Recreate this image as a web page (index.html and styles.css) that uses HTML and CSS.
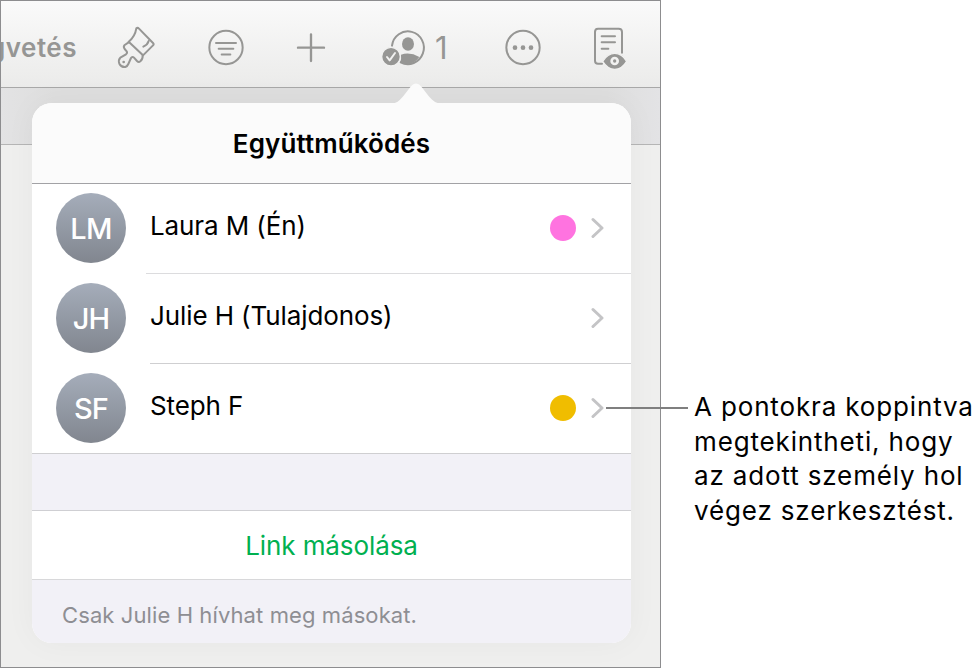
FILE: index.html
```
<!DOCTYPE html>
<html lang="hu">
<head>
  <meta charset="utf-8">
  <title>Együttműködés</title>
  <link rel="stylesheet" href="styles.css">
</head>
<body>
  <div class="main">
    <div class="screen">
      <div class="toolbar">
        <div class="doc_title">gvetés</div>
        <svg class="icon" width="42" height="45" viewBox="345 75 126 135">
          <path d="M409 85 Q413 82 417 86 L459 129 Q463 133 459 136 L429 166 L386 125 Q405 110 409 85 Z"/>
          <path d="M386 127 L374 135 Q369 140 374 147 L380 154 Q383 159 378 163 L361 173 Q354 181 358 191 Q364 202 376 201 Q382 199 385 192 L393 174 Q397 168 402 173 L411 183 Q416 188 421 184 Q429 177 428 166"/>
          <path d="M446 123 Q443 134 430 140"/>
          <circle class="fill" cx="371" cy="186" r="4"/>
        </svg>
        <svg class="icon" width="42" height="45" viewBox="0 0 126 135">
          <circle cx="63" cy="67.500" r="50"/>
          <path d="M33 54H93M41 71.500H85M50 88.500H76"/>
        </svg>
        <svg class="icon" width="42" height="45" viewBox="0 0 126 135">
          <path class="thick" d="M63 28V108M24 68H102"/>
        </svg>
        <div class="collab">
          <svg class="icon" width="48" height="45" viewBox="360 75 144 135">
            <path d="M396 137 A48 49 0 1 1 422 187"/>
            <ellipse class="fill" cx="444" cy="132" rx="18" ry="20"/>
            <path class="fill" d="M423 164 Q450 155 478 171 Q464 191 444 192 Q430 193 420 187 Q425 176 423 164Z"/>
            <circle class="badge" cx="393" cy="170" r="28"/>
            <path class="check" d="M381 171 L389 181 L405 159"/>
          </svg>
          <span class="count">1</span>
        </div>
        <svg class="icon" width="42" height="45" viewBox="0 0 126 135">
          <circle cx="63" cy="67.500" r="50"/>
          <circle class="fill" cx="39" cy="68" r="7"/>
          <circle class="fill" cx="63" cy="68" r="7"/>
          <circle class="fill" cx="87" cy="68" r="7"/>
        </svg>
        <svg class="icon" width="42" height="45" viewBox="330 75 126 135">
          <path d="M366 191 H354 Q345 191 345 182 V96 Q345 86 354 86 H416 Q426 86 426 96 V158"/>
          <path d="M365 109H405M365 127H405M365 146H385"/>
          <path class="badge" d="M368 184 Q383 160 404 160 Q426 160 440 184 Q426 208 404 208 Q383 208 368 184Z"/>
          <circle class="eye" cx="404" cy="183" r="13"/>
          <circle class="fill" cx="404" cy="183" r="5"/>
        </svg>
      </div>
      <div class="band"></div>

      <div class="popover">
        <svg class="arrow" width="58" height="23" viewBox="387 82 58 23">
          <path d="M387 104 C397 104 399 101 403 96.500 L410 87.500 C414 82 418 82 422 87.500 L429 96.500 C433 101 436 104 445 104 V105 H387Z"/>
        </svg>
        <div class="panel">
          <div class="header">Együttműködés</div>
          <div class="row">
            <div class="avatar">LM</div>
            <div class="info first">
              <span class="name">Laura M (Én)</span>
              <span class="dot pink"></span>
              <svg class="chevron" width="14" height="22" viewBox="0 0 14 22"><path d="M2 2.500 L11 11 L2 19.500"/></svg>
            </div>
          </div>
          <div class="row">
            <div class="avatar">JH</div>
            <div class="info">
              <span class="name">Julie H (Tulajdonos)</span>
              <svg class="chevron" width="14" height="22" viewBox="0 0 14 22"><path d="M2 2.500 L11 11 L2 19.500"/></svg>
            </div>
          </div>
          <div class="row last">
            <div class="avatar">SF</div>
            <div class="info">
              <span class="name">Steph F</span>
              <span class="dot yellow"></span>
              <svg class="chevron" width="14" height="22" viewBox="0 0 14 22"><path d="M2 2.500 L11 11 L2 19.500"/></svg>
            </div>
          </div>
          <div class="spacer"></div>
          <div class="copy_link">Link másolása</div>
          <div class="footer">Csak Julie H hívhat meg másokat.</div>
        </div>
      </div>
    </div>
    <div class="callout">
      <div class="callout_line"></div>
      <div>A pontokra koppintva</div>
      <div>megtekintheti, hogy</div>
      <div>az adott személy hol</div>
      <div>végez szerkesztést.</div>
    </div>
  </div>
</body>
</html>
```

FILE: styles.css
```
* {
  box-sizing: border-box;
}
body {
  margin: 0;
  background-color: #fff;
  font-family: Inter, "Liberation Sans", sans-serif;
  font-size: 26px;
  font-variant-ligatures: none;
  color: #000;
}
.main {
  display: flex;
  width: 976px;
  height: 668px;
}
.screen {
  position: relative;
  width: 661px;
  height: 668px;
  border: 1px solid #8d8d8f;
  background-color: #efefee;
  overflow: hidden;
}
.toolbar {
  display: grid;
  grid-template-columns: 114px 90px 85px 90px 122px 88px 1fr;
  height: 87px;
  padding-top: 24px;
  background: linear-gradient(#fafafa, #ebebea);
  border-bottom: 1px solid #a8a8a8;
}
.doc_title {
  display: flex;
  justify-content: flex-end;
  width: 76px;
  height: 45px;
  line-height: 45px;
  font-weight: 600;
  letter-spacing: 0.5px;
  color: #969694;
}
.icon {
  display: block;
  fill: none;
  stroke: #969694;
  stroke-width: 6;
  stroke-linecap: round;
  stroke-linejoin: round;
}
.icon .fill {
  fill: #969694;
  stroke: none;
}
.icon .thick {
  stroke-width: 7;
}
.icon .badge {
  fill: #969694;
  stroke: #f1f1f0;
  stroke-width: 4;
}
.icon .check {
  stroke: #f1f1f0;
}
.icon .eye {
  fill: #f1f1f0;
  stroke: none;
}
.collab {
  display: flex;
}
.count {
  margin-left: 7px;
  font-size: 31px;
  line-height: 46px;
  color: #969694;
}
.band {
  height: 57px;
  background: linear-gradient(90deg, #e3e3e4, #dedede 8%, #dedede 92%, #e3e3e5);
  border-bottom: 1px solid #b5b5b5;
}
.popover {
  position: absolute;
  left: 31px;
  top: 102px;
  width: 599px;
}
.arrow {
  position: absolute;
  left: 355px;
  top: -21px;
  fill: #fbfbfb;
}
.panel {
  border-radius: 20px;
  overflow: hidden;
  background-color: #fff;
  box-shadow: 0 0 32px rgba(0, 0, 0, 0.04);
}
.header {
  height: 81px;
  line-height: 81px;
  text-align: center;
  font-weight: 600;
  letter-spacing: 0.1px;
  background-color: #fbfbfb;
  border-bottom: 1px solid #a2a2a5;
}
.row {
  display: flex;
  height: 90px;
  padding-left: 24px;
}
.avatar {
  width: 70px;
  height: 70px;
  margin-top: 9px;
  border-radius: 50%;
  background: linear-gradient(#a5adba, #81868f);
  color: #fff;
  font-size: 29px;
  font-weight: 500;
  letter-spacing: -0.8px;
  line-height: 72px;
  text-align: center;
}
.info {
  display: flex;
  align-items: center;
  flex: 1;
  margin-left: 24px;
  padding-right: 26px;
  padding-bottom: 1px;
  border-bottom: 1px solid #cfcfd1;
}
.first {
  margin-left: 20px;
  padding-left: 4px;
  border-bottom-color: #dcdcde;
}
.last .info {
  border-bottom: none;
}
.last {
  border-bottom: 1px solid #cfcfd1;
}
.name {
  flex: 1;
  margin-top: -6px;
  letter-spacing: -0.1px;
}
.dot {
  width: 26px;
  height: 26px;
  margin-right: 15px;
  border-radius: 50%;
}
.pink {
  background-color: #ff73e0;
}
.yellow {
  background-color: #f0bd00;
}
.chevron {
  fill: none;
  stroke: #c4c4c6;
  stroke-width: 3;
  stroke-linecap: round;
  stroke-linejoin: round;
}
.spacer {
  height: 57px;
  background-color: #f2f1f7;
  border-bottom: 1px solid #cfcfd3;
}
.copy_link {
  height: 69px;
  line-height: 69px;
  text-align: center;
  letter-spacing: -0.1px;
  color: #00b050;
  border-bottom: 1px solid #d8d8da;
}
.footer {
  height: 63px;
  padding-left: 30px;
  line-height: 70px;
  font-size: 22px;
  letter-spacing: 0.1px;
  color: #8e8e93;
  background-color: #f2f1f7;
}
.callout {
  position: relative;
  padding: 390px 0 0 33px;
  line-height: 34.5px;
  letter-spacing: 0.85px;
  white-space: nowrap;
}
.callout_line {
  position: absolute;
  left: -55px;
  top: 407px;
  width: 82px;
  height: 2px;
  background-color: #7f7f7f;
}
```
